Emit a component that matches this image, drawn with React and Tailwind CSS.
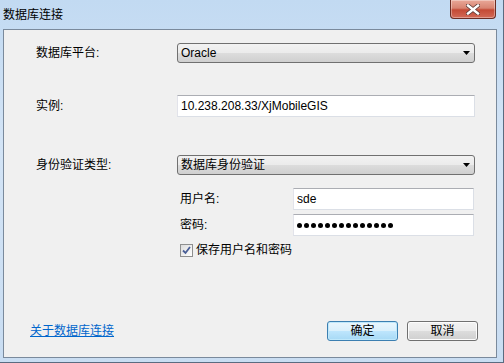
import React from 'react';

const FONT = { fontFamily: '"Liberation Sans", "Noto Sans CJK SC", sans-serif' };

const Combo = ({ value }) => (
  <div className="relative flex h-[20px] w-[298px] items-center rounded-[3px] border border-[#707070] bg-[linear-gradient(#f2f2f2_0%,#ebebeb_50%,#dddddd_50%,#cfcfcf_100%)] pl-[3px] text-[12px] text-black">
    <span className="flex-1 leading-none">{value}</span>
    <svg width="7" height="4" viewBox="0 0 7 4" className="mr-[4px]">
      <path d="M0 0h7L3.5 4z" fill="#000" />
    </svg>
  </div>
);

const TextBox = ({ width, children }) => (
  <div
    className="flex h-[22px] items-center border border-[#dbdfe6] border-t-[#abadb3] border-l-[#e2e3ea] bg-white pl-[3px] text-[12px] text-black"
    style={{ width }}
  >
    {children}
  </div>
);

const Button = ({ label, primary }) => (
  <button
    className={`flex h-[20px] w-[71px] items-center justify-center rounded-[3px] border text-[12px] text-black ${
      primary
        ? 'border-[#3c7fb1] bg-[linear-gradient(#eaf6fd_0%,#d9f0fc_50%,#bee6fd_50%,#a7d9f5_100%)] shadow-[inset_0_0_0_1px_#bfe8fb]'
        : 'border-[#707070] bg-[linear-gradient(#f2f2f2_0%,#ebebeb_50%,#dddddd_50%,#cfcfcf_100%)] shadow-[inset_0_0_0_1px_#fcfcfc]'
    }`}
  >
    {label}
  </button>
);

export default function App() {
  return (
    <div
      className="flex h-[363px] w-[504px] flex-col border-r border-b border-[#5a6b80] bg-[linear-gradient(180deg,#c2daf2_0%,#d3e4f6_40%,#c9ddf2_100%)]"
      style={FONT}
    >
      {/* title bar */}
      <div className="flex h-[29px] shrink-0 items-start justify-between">
        <span className="mt-[7px] ml-[3px] text-[12px] leading-[16px] text-black">数据库连接</span>
        <div className="mr-[7px] flex h-[19px] w-[46px] items-center justify-center rounded-b-[4px] border border-t-0 border-[#6b2d24] bg-[linear-gradient(#e9a898_0%,#d88472_45%,#c44a35_55%,#d26a57_100%)] shadow-[inset_0_0_0_1px_rgba(255,255,255,0.35)]">
          <svg width="14" height="11" viewBox="0 0 14 11">
            <path d="M2 1.5L12 9.5M12 1.5L2 9.5" stroke="#5a3a36" strokeWidth="4" strokeLinecap="square" />
            <path d="M2 1.5L12 9.5M12 1.5L2 9.5" stroke="#fff" strokeWidth="2.4" strokeLinecap="square" />
          </svg>
        </div>
      </div>

      {/* client area */}
      <div className="ml-[3px] mr-[6px] mb-[4px] flex flex-1 flex-col border border-[#7a8a9c] bg-[#f0f0f0] text-[12px] text-black">
        <div className="mt-[13px] flex items-center">
          <span className="w-[173px] shrink-0 pl-[32px]">数据库平台:</span>
          <Combo value="Oracle" />
        </div>

        <div className="mt-[32px] flex items-center">
          <span className="w-[173px] shrink-0 pl-[32px]">实例:</span>
          <TextBox width={298}>10.238.208.33/XjMobileGIS</TextBox>
        </div>

        <div className="mt-[38px] flex items-center">
          <span className="w-[173px] shrink-0 pl-[32px]">身份验证类型:</span>
          <Combo value="数据库身份验证" />
        </div>

        <div className="mt-[13px] flex items-center pl-[176px]">
          <span className="w-[113px] shrink-0">用户名:</span>
          <TextBox width={181}>sde</TextBox>
        </div>

        <div className="mt-[4px] flex items-center pl-[176px]">
          <span className="w-[113px] shrink-0">密码:</span>
          <TextBox width={181}>
            <div className="flex gap-[2px]">
              {Array.from({ length: 14 }).map((_, i) => (
                <span key={i} className="h-[5px] w-[5px] rounded-full bg-black" />
              ))}
            </div>
          </TextBox>
        </div>

        <div className="mt-[7px] flex items-center pl-[176px]">
          <div className="flex h-[13px] w-[13px] items-center justify-center border border-[#8e8f8f] bg-[linear-gradient(135deg,#dcdcdc,#ffffff)]">
            <svg width="9" height="9" viewBox="0 0 9 9">
              <path d="M1 4.5L3.5 7L8 1" fill="none" stroke="#4a5f97" strokeWidth="1.8" />
            </svg>
          </div>
          <span className="ml-[3px] leading-[14px]">保存用户名和密码</span>
        </div>

        <div className="mt-auto mb-[16px] flex items-center pl-[26px] pr-[18px]">
          <a href="#" className="flex-1 text-[#0066cc] underline">关于数据库连接</a>
          <div className="flex gap-[9px]">
            <Button label="确定" primary />
            <Button label="取消" />
          </div>
        </div>
      </div>
    </div>
  );
}
